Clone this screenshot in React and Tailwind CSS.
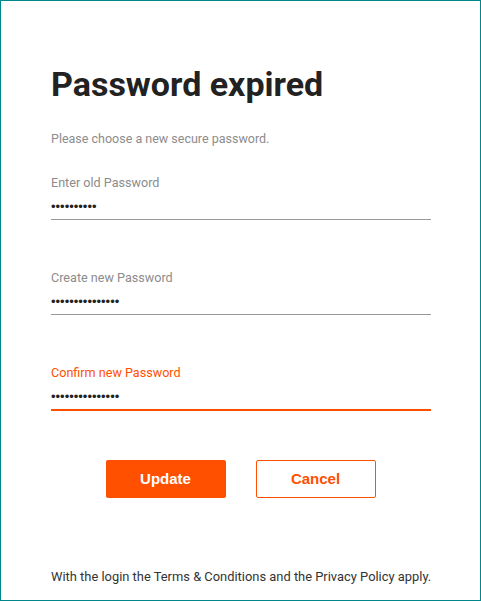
const ORANGE = '#ff5000';

function Field({ label, dots, active }) {
  return (
    <div
      className={`flex flex-col pb-[4px] ${
        active ? 'border-b-2 border-[#ff5000]' : 'border-b border-[#999999]'
      }`}
    >
      <span
        className={`text-[12.6px] leading-[16px] ${active ? 'text-[#ff5000]' : 'text-[#8c8c8c]'}`}
      >
        {label}
      </span>
      <span className="mt-[8px] text-[13px] leading-[16px] text-[#222] font-['Liberation_Sans',sans-serif]">
        {'•'.repeat(dots)}
      </span>
    </div>
  );
}

export default function App() {
  return (
    <div className="w-[481px] h-[601px] bg-white border border-[#00868b] font-['Roboto',sans-serif]">
      <div className="pl-[50px] pr-[49px] pt-[63px] flex flex-col">
        <h1 className="text-[34px] leading-[40px] font-bold text-[#222]">
          Password expired
        </h1>
        <p className="mt-[27px] text-[12.5px] leading-[16px] text-[#8c8c8c]">
          Please choose a new secure password.
        </p>

        <div className="mt-[28px] flex flex-col gap-[50px]">
          <Field label="Enter old Password" dots={10} />
          <Field label="Create new Password" dots={15} />
          <Field label="Confirm new Password" dots={15} active />
        </div>

        <div className="mt-[49px] flex justify-center gap-[30px] pr-px">
          <button
            className="w-[120px] h-[38px] rounded-[2px] text-white text-[15px] font-bold font-['Liberation_Sans',sans-serif]"
            style={{ backgroundColor: ORANGE }}
          >
            Update
          </button>
          <button className="w-[120px] h-[38px] rounded-[2px] border border-[#ff5000] bg-white text-[#ff5000] text-[15px] font-bold font-['Liberation_Sans',sans-serif]">
            Cancel
          </button>
        </div>

        <p className="mt-[71px] text-[12.9px] leading-[16px] text-[#333] whitespace-nowrap">
          With the login the Terms &amp; Conditions and the Privacy Policy apply.
        </p>
      </div>
    </div>
  );
}
